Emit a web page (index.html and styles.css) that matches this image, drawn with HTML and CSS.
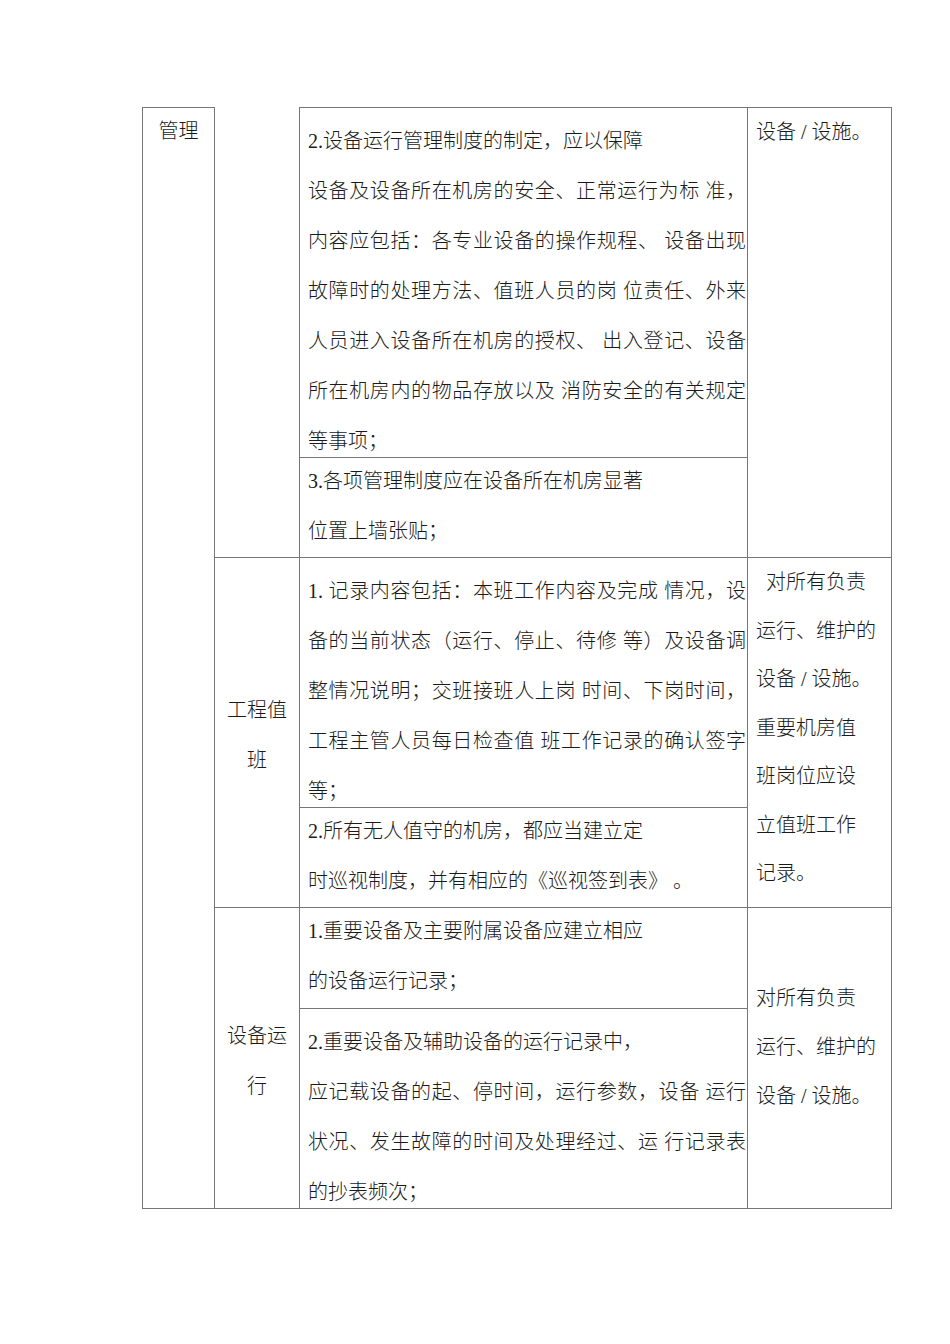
FILE: index.html
```html
<!DOCTYPE html>
<html lang="zh-CN">
<head>
<meta charset="utf-8">
<title>设备运行管理</title>
<link rel="stylesheet" href="styles.css">
</head>
<body>
<div class="page">
  <div class="sheet">
    <div class="cell c-mgmt"><div class="lines">管理</div></div>
    <div class="cell c-blank"></div>

    <div class="cell mid a1 tall">
      <div class="lines">
        <div>2.设备运行管理制度的制定，应以保障</div>
        <div class="j">设备及设备所在机房的安全、正常运行为标 准，</div>
        <div class="j">内容应包括：各专业设备的操作规程、 设备出现</div>
        <div class="j">故障时的处理方法、值班人员的岗 位责任、外来</div>
        <div class="j">人员进入设备所在机房的授权、 出入登记、设备</div>
        <div class="j">所在机房内的物品存放以及 消防安全的有关规定</div>
        <div>等事项；</div>
      </div>
    </div>
    <div class="cell mid a2 short">
      <div class="lines">
        <div>3.各项管理制度应在设备所在机房显著</div>
        <div>位置上墙张贴；</div>
      </div>
    </div>
    <div class="cell right r1">
      <div class="lines">设备<span class="sl">/</span>设施。</div>
    </div>

    <div class="cell cat duty"><div class="lines">工程值<br>班</div></div>
    <div class="cell mid c1 tall">
      <div class="lines">
        <div class="j">1. 记录内容包括：本班工作内容及完成 情况，设</div>
        <div class="j">备的当前状态（运行、停止、待修 等）及设备调</div>
        <div class="j">整情况说明；交班接班人上岗 时间、下岗时间，</div>
        <div class="j">工程主管人员每日检查值 班工作记录的确认签字</div>
        <div>等；</div>
      </div>
    </div>
    <div class="cell mid c2 short">
      <div class="lines">
        <div>2.所有无人值守的机房，都应当建立定</div>
        <div>时巡视制度，并有相应的《巡视签到表》 。</div>
      </div>
    </div>
    <div class="cell right r2">
      <div class="lines dense">
        <div class="ind">对所有负责</div>
        <div>运行、维护的</div>
        <div>设备<span class="sl">/</span>设施。</div>
        <div>重要机房值</div>
        <div>班岗位应设</div>
        <div>立值班工作</div>
        <div>记录。</div>
      </div>
    </div>

    <div class="cell cat op"><div class="lines">设备运<br>行</div></div>
    <div class="cell mid e1 short">
      <div class="lines">
        <div>1.重要设备及主要附属设备应建立相应</div>
        <div>的设备运行记录；</div>
      </div>
    </div>
    <div class="cell mid e2 tall">
      <div class="lines">
        <div>2.重要设备及辅助设备的运行记录中，</div>
        <div class="j">应记载设备的起、停时间，运行参数，设备 运行</div>
        <div class="j">状况、发生故障的时间及处理经过、运 行记录表</div>
        <div>的抄表频次；</div>
      </div>
    </div>
    <div class="cell right r3">
      <div class="lines mid3">
        <div>对所有负责</div>
        <div>运行、维护的</div>
        <div>设备<span class="sl">/</span>设施。</div>
      </div>
    </div>
  </div>
</div>
</body>
</html>
```

FILE: styles.css
```css
html, body {
  margin: 0;
  padding: 0;
  background: #ffffff;
}

body {
  font-family: "Liberation Serif", "Noto Sans CJK SC", serif;
  font-size: 20px;
  font-weight: 300;
  color: #1a1a1a;
}

.page {
  padding-top: 107px;
  padding-left: 142px;
}

.sheet {
  display: grid;
  grid-template-columns: 72px 85px 448px 145px;
  grid-template-rows: 350px 100px 250px 100px 101px 201px;
  width: 750px;
}

.cell {
  box-sizing: border-box;
  border-left: 1px solid #767676;
  border-top: 1px solid #767676;
  overflow: hidden;
}

.lines {
  line-height: 50px;
}

/* column 1 */
.c-mgmt {
  grid-column: 1;
  grid-row: 1 / 7;
  border-bottom: 1px solid #767676;
  text-align: center;
}
.c-mgmt .lines {
  margin-top: -2px;
}

/* column 2 */
.c-blank {
  grid-column: 2;
  grid-row: 1 / 3;
  border-top: none;
}

.cat {
  grid-column: 2;
  display: flex;
  align-items: center;
  justify-content: center;
  text-align: center;
}
.duty {
  grid-row: 3 / 5;
  padding-top: 4px;
}
.op {
  grid-row: 5 / 7;
  border-bottom: 1px solid #767676;
  padding-top: 6px;
}

/* column 3 */
.mid {
  grid-column: 3;
  padding-left: 8px;
  padding-right: 1px;
}
.mid.tall {
  padding-top: 8px;
}
.mid.short .lines {
  margin-top: -2px;
}
.a1 { grid-row: 1; }
.a2 { grid-row: 2; }
.c1 { grid-row: 3; }
.c2 { grid-row: 4; }
.e1 { grid-row: 5; }
.e2 { grid-row: 6; border-bottom: 1px solid #767676; }

.j {
  text-align: justify;
  text-align-last: justify;
}

/* column 4 */
.right {
  grid-column: 4;
  border-right: 1px solid #767676;
  padding-left: 8px;
}
.r1 { grid-row: 1 / 3; }
.r2 { grid-row: 3 / 5; }
.r3 {
  grid-row: 5 / 7;
  border-bottom: 1px solid #767676;
  padding-top: 66px;
}
.r1 .lines {
  margin-top: -1px;
}
.lines.dense {
  line-height: 48.5px;
}
.lines.mid3 {
  line-height: 49px;
}
.ind {
  text-indent: 10px;
}
.sl {
  margin: 0 5px;
}
```
